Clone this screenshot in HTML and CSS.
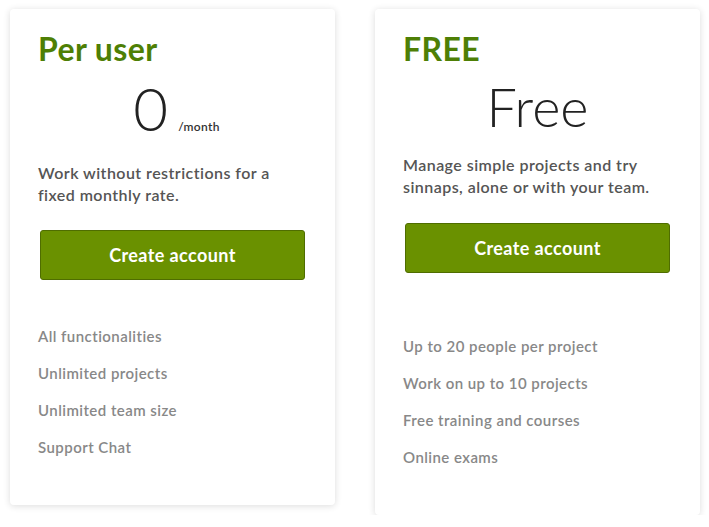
FILE: index.html
```html
<!DOCTYPE html>
<html lang="en">
<head>
<meta charset="utf-8">
<title>Plans</title>
<link rel="stylesheet" href="styles.css">
</head>
<body>
<main class="plans">
  <section class="card card--user">
    <h2 class="plan-name">Per user</h2>
    <div class="price price--user"><span class="amount">0</span><span class="period">/month</span></div>
    <p class="desc desc--user">Work without restrictions for a fixed monthly rate.</p>
    <a class="cta" href="#">Create account</a>
    <ul class="features features--user">
      <li>All functionalities</li>
      <li>Unlimited projects</li>
      <li>Unlimited team size</li>
      <li>Support Chat</li>
    </ul>
  </section>
  <section class="card card--free">
    <h2 class="plan-name">FREE</h2>
    <div class="price price--free"><span class="amount-free">Free</span></div>
    <p class="desc desc--free">Manage simple projects and try sinnaps, alone or with your team.</p>
    <a class="cta cta--free" href="#">Create account</a>
    <ul class="features features--free">
      <li>Up to 20 people per project</li>
      <li>Work on up to 10 projects</li>
      <li>Free training and courses</li>
      <li>Online exams</li>
    </ul>
  </section>
</main>
</body>
</html>
```

FILE: styles.css
```css
html, body {
  margin: 0;
  padding: 0;
  background: #ffffff;
}

body {
  font-family: "Lato", "Noto Sans", sans-serif;
  color: #555;
}

.plans {
  display: flex;
  align-items: flex-start;
  gap: 40px;
  padding: 9px 0 0 10px;
}

.card {
  width: 325px;
  box-sizing: border-box;
  padding: 21px 28px 39px;
  background: #fff;
  border-radius: 4px;
  box-shadow: 0 1px 7px rgba(0, 0, 0, 0.14);
}

.plan-name {
  margin: 0;
  font-size: 32px;
  line-height: 38px;
  font-weight: 700;
  letter-spacing: 0.4px;
  color: #4e7f05;
}

.price {
  text-align: center;
  line-height: 1;
  color: #222;
}

.price--user {
  margin-top: 10px;
  padding-left: 8px;
}

.price--free {
  margin-top: 12px;
}

.amount {
  font-size: 60px;
  font-weight: 300;
}

.amount-free {
  font-size: 54px;
  font-weight: 300;
}

.period {
  font-size: 12px;
  font-weight: 600;
  margin-left: 10px;
  letter-spacing: 0.3px;
  color: #333;
}

.desc {
  margin: 0;
  font-size: 16px;
  line-height: 22px;
  font-weight: 600;
  letter-spacing: 0.45px;
  color: #555;
}

.desc--user {
  margin-top: 24px;
}

.desc--free {
  margin-top: 20px;
}

.cta {
  display: flex;
  align-items: center;
  justify-content: center;
  box-sizing: border-box;
  height: 50px;
  margin: 24px 2px 0;
  background: #6a9100;
  border: 1px solid #4f6d00;
  border-radius: 3px;
  color: #fff;
  font-size: 18px;
  font-weight: 700;
  letter-spacing: 0.4px;
  text-decoration: none;
}

.cta--free {
  margin-top: 25px;
}

.features {
  list-style: none;
  margin: 38px 0 0;
  padding: 0;
  font-size: 15px;
  line-height: 37px;
  font-weight: 600;
  letter-spacing: 0.45px;
  color: #888;
}

.features--free {
  margin-top: 55px;
}
```
